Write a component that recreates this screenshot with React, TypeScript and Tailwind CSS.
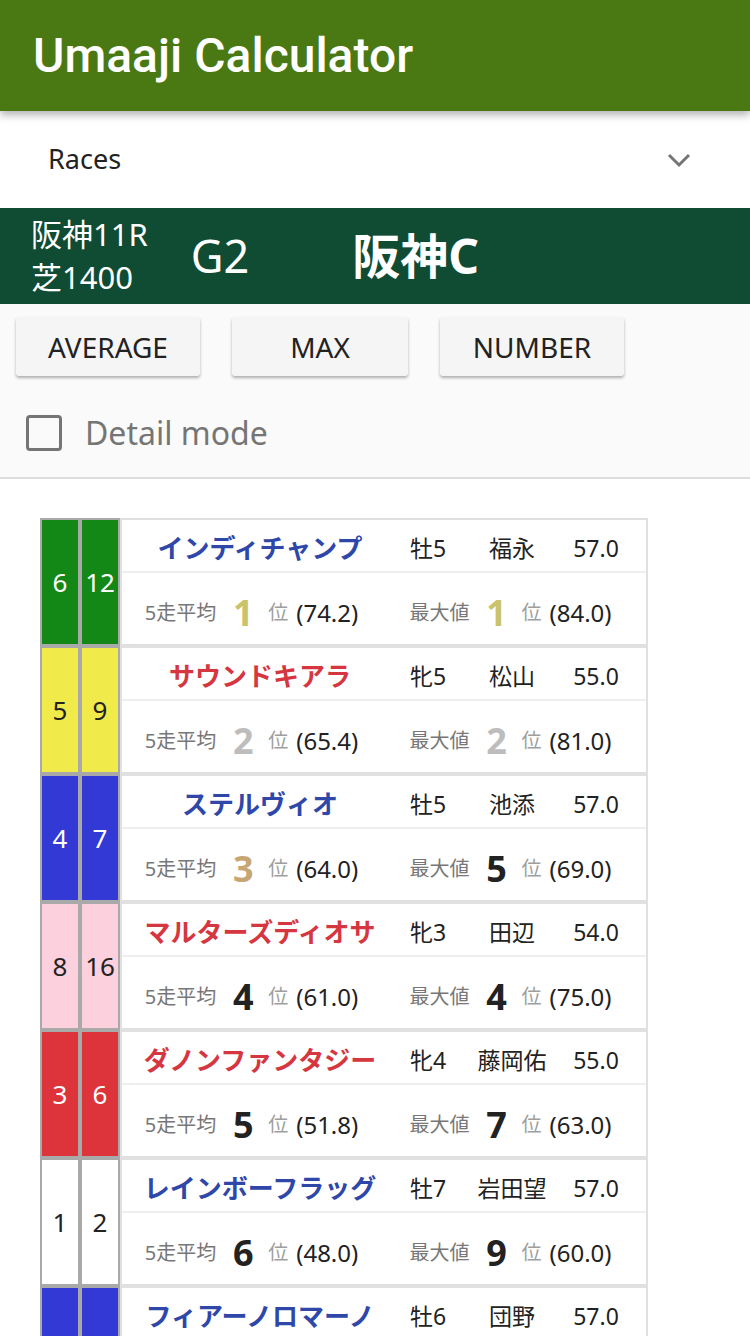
import React from "react";

type Horse = {
  waku: number;
  ban: number;
  name: string;
  sex: string;
  jockey: string;
  weight: string;
  avgRank: number;
  avg: string;
  maxRank: number;
  max: string;
};

const horses: Horse[] = [
  { waku: 6, ban: 12, name: "インディチャンプ", sex: "牡5", jockey: "福永", weight: "57.0", avgRank: 1, avg: "(74.2)", maxRank: 1, max: "(84.0)" },
  { waku: 5, ban: 9, name: "サウンドキアラ", sex: "牝5", jockey: "松山", weight: "55.0", avgRank: 2, avg: "(65.4)", maxRank: 2, max: "(81.0)" },
  { waku: 4, ban: 7, name: "ステルヴィオ", sex: "牡5", jockey: "池添", weight: "57.0", avgRank: 3, avg: "(64.0)", maxRank: 5, max: "(69.0)" },
  { waku: 8, ban: 16, name: "マルターズディオサ", sex: "牝3", jockey: "田辺", weight: "54.0", avgRank: 4, avg: "(61.0)", maxRank: 4, max: "(75.0)" },
  { waku: 3, ban: 6, name: "ダノンファンタジー", sex: "牝4", jockey: "藤岡佑", weight: "55.0", avgRank: 5, avg: "(51.8)", maxRank: 7, max: "(63.0)" },
  { waku: 1, ban: 2, name: "レインボーフラッグ", sex: "牡7", jockey: "岩田望", weight: "57.0", avgRank: 6, avg: "(48.0)", maxRank: 9, max: "(60.0)" },
  { waku: 4, ban: 8, name: "フィアーノロマーノ", sex: "牡6", jockey: "団野", weight: "57.0", avgRank: 7, avg: "(46.2)", maxRank: 8, max: "(61.0)" },
];

const wakuClass: Record<number, string> = {
  1: "bg-white text-[#222]",
  2: "bg-[#222] text-white",
  3: "bg-[#dc343a] text-white",
  4: "bg-[#3339d5] text-white",
  5: "bg-[#f0ea4a] text-[#222]",
  6: "bg-[#138816] text-white",
  7: "bg-[#f0a020] text-[#222]",
  8: "bg-[#fcd0dc] text-[#222]",
};

function rankClass(r: number) {
  if (r === 1) return "text-[#c9c46c]";
  if (r === 2) return "text-[#bdbdbd]";
  if (r === 3) return "text-[#c6a672]";
  return "text-[#222]";
}

function Stat({ label, rank, value }: { label: string; rank: number; value: string }) {
  return (
    <div className="flex flex-1 items-center justify-center pt-[8px]">
      <span className="text-[20px] text-[#777]">{label}</span>
      <span className={`ml-[15px] w-[24px] text-center text-[36px] font-bold leading-none ${rankClass(rank)}`}>{rank}</span>
      <span className="ml-[13px] text-[20px] text-[#9e9e9e]">位</span>
      <span className="ml-[8px] text-[24px] text-[#222]">{value}</span>
    </div>
  );
}

function Row({ h }: { h: Horse }) {
  const female = h.sex.startsWith("牝");
  return (
    <div className="flex h-[128px]">
      <div className={`flex w-[40px] items-center justify-center border-2 border-[#a9a9a9] text-[26px] ${wakuClass[h.waku]}`}>{h.waku}</div>
      <div className={`flex w-[40px] items-center justify-center border-2 border-[#a9a9a9] text-[26px] ${wakuClass[h.waku]}`}>{h.ban}</div>
      <div className="flex w-[528px] flex-col border-2 border-[#e0e0e0] bg-white">
        <div className="flex h-[53px] items-center border-b-2 border-[#efefef] pt-[5px]">
          <div className={`w-[276px] text-center text-[26px] font-semibold ${female ? "text-[#d5363f]" : "text-[#2e47a8]"}`}>{h.name}</div>
          <div className="w-[60px] text-center text-[23px] text-[#222]">{h.sex}</div>
          <div className="w-[108px] text-center text-[23px] text-[#222]">{h.jockey}</div>
          <div className="w-[60px] text-center text-[23px] text-[#222]">{h.weight}</div>
        </div>
        <div className="flex flex-1 items-center pr-[6px]">
          <Stat label="5走平均" rank={h.avgRank} value={h.avg} />
          <Stat label="最大値" rank={h.maxRank} value={h.max} />
        </div>
      </div>
    </div>
  );
}

export default function App() {
  return (
    <div className="min-h-[1336px] bg-white" style={{ fontFamily: '"Noto Sans", "Noto Sans CJK JP", sans-serif' }}>
      <header className="relative z-10 flex h-[111px] items-center bg-[#4a7913] pl-[33px] shadow-[0_4px_8px_rgba(0,0,0,0.3)]">
        <h1 className="text-[48px] font-medium text-white" style={{ fontFamily: 'Roboto, "Noto Sans", sans-serif' }}>
          Umaaji Calculator
        </h1>
      </header>
      <div className="flex h-[97px] items-center justify-between bg-white pl-[48px] pr-[58px]">
        <span className="text-[27px] text-[#222]">Races</span>
        <svg width="26" height="18" viewBox="0 0 26 18" fill="none">
          <path d="M3 4 L13 14 L23 4" stroke="#757575" strokeWidth="3" />
        </svg>
      </div>
      <div className="flex h-[96px] items-center bg-[#0f4c33] text-white">
        <div className="ml-[31px] flex flex-col text-[31px] leading-[43px]">
          <span>阪神11R</span>
          <span>芝1400</span>
        </div>
        <div className="ml-[43px] text-[45px]">G2</div>
        <div className="ml-[103px] text-[48px] font-bold">阪神C</div>
      </div>
      <div className="border-b-2 border-[#dcdcdc] bg-[#fafafa] pb-[20px]">
        <div className="flex gap-[32px] pl-[16px] pt-[13px]">
          <button className="h-[59px] w-[184px] rounded-[3px] bg-[#f5f5f5] text-[28px] text-[#222] shadow-[0_2px_3px_rgba(0,0,0,0.3)]">AVERAGE</button>
          <button className="h-[59px] w-[176px] rounded-[3px] bg-[#f5f5f5] text-[28px] text-[#222] shadow-[0_2px_3px_rgba(0,0,0,0.3)]">MAX</button>
          <button className="h-[59px] w-[184px] rounded-[3px] bg-[#f5f5f5] text-[28px] text-[#222] shadow-[0_2px_3px_rgba(0,0,0,0.3)]">NUMBER</button>
        </div>
        <div className="mt-[33px] flex h-[48px] items-center pl-[26px]">
          <div className="h-[36px] w-[36px] rounded-[4px] border-[3px] border-[#757575]" />
          <span className="ml-[23px] text-[32px] text-[#757575]">Detail mode</span>
        </div>
      </div>
      <div className="pl-[40px] pt-[39px]">
        <div className="flex w-[608px] flex-col">
          {horses.map((h) => (
            <Row key={h.ban} h={h} />
          ))}
        </div>
      </div>
    </div>
  );
}
